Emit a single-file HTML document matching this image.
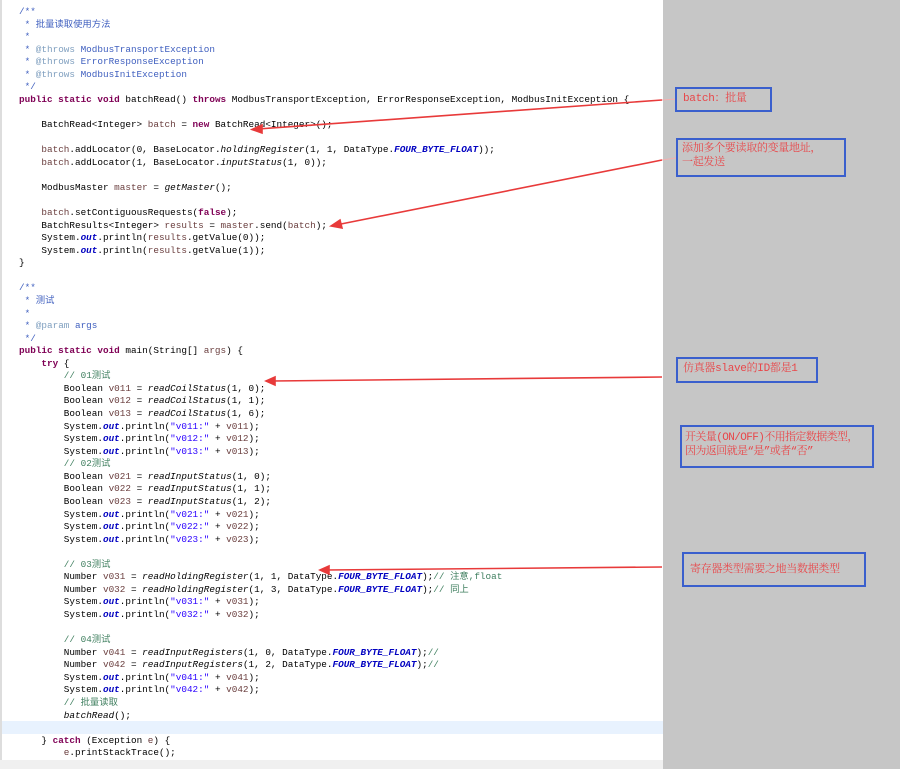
<!DOCTYPE html>
<html><head><meta charset="utf-8"><style>
body{margin:0;width:900px;height:769px;overflow:hidden;background:#fff;position:relative}
#ed{position:absolute;left:0;top:0;width:663px;height:769px;background:#fff;border-left:2px solid #ddd;box-sizing:border-box}
#gray{position:absolute;left:663px;top:0;width:237px;height:769px;background:#c6c6c6}
#hl{position:absolute;left:2px;top:721px;width:661px;height:13px;background:#e8f2fe}
#bot{position:absolute;left:0;top:760px;width:663px;height:9px;background:#f0f0f0}
pre{position:absolute;left:19px;top:6px;margin:0;font-family:"Liberation Mono","Noto Sans CJK SC",monospace;font-size:9.33px;line-height:12.56px;color:#000}
.k{color:#7f0055;font-weight:bold}.c{color:#3f7f5f}.j{color:#3f5fbf}.t{color:#7f9fbf}.s{color:#2a00ff}
.f{color:#0000c0;font-weight:bold;font-style:italic}.v{color:#6a3e3e}.i{font-style:italic}
.box{position:absolute;border:2px solid #3a5fcd;box-sizing:border-box;color:#e8474a;font-family:"Liberation Mono","Noto Serif CJK SC",serif;font-size:11px;line-height:14px;padding:3px 6px;white-space:nowrap;letter-spacing:-0.3px}
svg{position:absolute;left:0;top:0}
</style></head><body>
<div id="ed"></div><div id="gray"></div><div id="hl"></div><div id="bot"></div>
<pre><span class="j">/**
 * 批量读取使用方法
 *
 * <span class="t">@throws</span> ModbusTransportException
 * <span class="t">@throws</span> ErrorResponseException
 * <span class="t">@throws</span> ModbusInitException
 */</span>
<span class="k">public static void</span> batchRead() <span class="k">throws</span> ModbusTransportException, ErrorResponseException, ModbusInitException {

    BatchRead&lt;Integer&gt; <span class="v">batch</span> = <span class="k">new</span> BatchRead&lt;Integer&gt;();

    <span class="v">batch</span>.addLocator(0, BaseLocator.<span class="i">holdingRegister</span>(1, 1, DataType.<span class="f">FOUR_BYTE_FLOAT</span>));
    <span class="v">batch</span>.addLocator(1, BaseLocator.<span class="i">inputStatus</span>(1, 0));

    ModbusMaster <span class="v">master</span> = <span class="i">getMaster</span>();

    <span class="v">batch</span>.setContiguousRequests(<span class="k">false</span>);
    BatchResults&lt;Integer&gt; <span class="v">results</span> = <span class="v">master</span>.send(<span class="v">batch</span>);
    System.<span class="f">out</span>.println(<span class="v">results</span>.getValue(0));
    System.<span class="f">out</span>.println(<span class="v">results</span>.getValue(1));
}

<span class="j">/**
 * 测试
 *
 * <span class="t">@param</span> args
 */</span>
<span class="k">public static void</span> main(String[] <span class="v">args</span>) {
    <span class="k">try</span> {
        <span class="c">// 01测试</span>
        Boolean <span class="v">v011</span> = <span class="i">readCoilStatus</span>(1, 0);
        Boolean <span class="v">v012</span> = <span class="i">readCoilStatus</span>(1, 1);
        Boolean <span class="v">v013</span> = <span class="i">readCoilStatus</span>(1, 6);
        System.<span class="f">out</span>.println(<span class="s">"v011:"</span> + <span class="v">v011</span>);
        System.<span class="f">out</span>.println(<span class="s">"v012:"</span> + <span class="v">v012</span>);
        System.<span class="f">out</span>.println(<span class="s">"v013:"</span> + <span class="v">v013</span>);
        <span class="c">// 02测试</span>
        Boolean <span class="v">v021</span> = <span class="i">readInputStatus</span>(1, 0);
        Boolean <span class="v">v022</span> = <span class="i">readInputStatus</span>(1, 1);
        Boolean <span class="v">v023</span> = <span class="i">readInputStatus</span>(1, 2);
        System.<span class="f">out</span>.println(<span class="s">"v021:"</span> + <span class="v">v021</span>);
        System.<span class="f">out</span>.println(<span class="s">"v022:"</span> + <span class="v">v022</span>);
        System.<span class="f">out</span>.println(<span class="s">"v023:"</span> + <span class="v">v023</span>);

        <span class="c">// 03测试</span>
        Number <span class="v">v031</span> = <span class="i">readHoldingRegister</span>(1, 1, DataType.<span class="f">FOUR_BYTE_FLOAT</span>);<span class="c">// 注意,float</span>
        Number <span class="v">v032</span> = <span class="i">readHoldingRegister</span>(1, 3, DataType.<span class="f">FOUR_BYTE_FLOAT</span>);<span class="c">// 同上</span>
        System.<span class="f">out</span>.println(<span class="s">"v031:"</span> + <span class="v">v031</span>);
        System.<span class="f">out</span>.println(<span class="s">"v032:"</span> + <span class="v">v032</span>);

        <span class="c">// 04测试</span>
        Number <span class="v">v041</span> = <span class="i">readInputRegisters</span>(1, 0, DataType.<span class="f">FOUR_BYTE_FLOAT</span>);<span class="c">//</span>
        Number <span class="v">v042</span> = <span class="i">readInputRegisters</span>(1, 2, DataType.<span class="f">FOUR_BYTE_FLOAT</span>);<span class="c">//</span>
        System.<span class="f">out</span>.println(<span class="s">"v041:"</span> + <span class="v">v041</span>);
        System.<span class="f">out</span>.println(<span class="s">"v042:"</span> + <span class="v">v042</span>);
        <span class="c">// 批量读取</span>
        <span class="i">batchRead</span>();

    } <span class="k">catch</span> (Exception <span class="v">e</span>) {
        <span class="v">e</span>.printStackTrace();</pre>
<svg width="900" height="769">
<g stroke="#e83a3a" stroke-width="1.6" fill="#e83a3a">
<line x1="662" y1="100" x2="258" y2="129"/><polygon points="252,129.5 262,125 262,133"/>
<line x1="662" y1="160" x2="336" y2="225"/><polygon points="331,226 340,220 342,228"/>
<line x1="662" y1="377" x2="272" y2="381"/><polygon points="266,381 275,377 275,385"/>
<line x1="662" y1="567" x2="326" y2="570"/><polygon points="320,570 329,566 329,574"/>
</g>
<g stroke="#f2b0b0" stroke-width="1"><line x1="662" y1="100" x2="676" y2="99"/><line x1="662" y1="160" x2="676" y2="158"/></g>
</svg>
<div class="box" style="left:675px;top:87px;width:97px;height:25px">batch：批量</div>
<div class="box" style="left:676px;top:138px;width:170px;height:39px;padding:2px 4px">添加多个要读取的变量地址，<br>一起发送</div>
<div class="box" style="left:676px;top:357px;width:142px;height:26px;padding:3px 5px">仿真器slave的ID都是1</div>
<div class="box" style="left:680px;top:425px;width:194px;height:43px;padding:4px 3px;letter-spacing:-0.6px">开关量(ON/OFF)不用指定数据类型，<br>因为返回就是“是”或者“否”</div>
<div class="box" style="left:682px;top:552px;width:184px;height:35px;padding:9px 6px">寄存器类型需要之地当数据类型</div>
</body></html>
